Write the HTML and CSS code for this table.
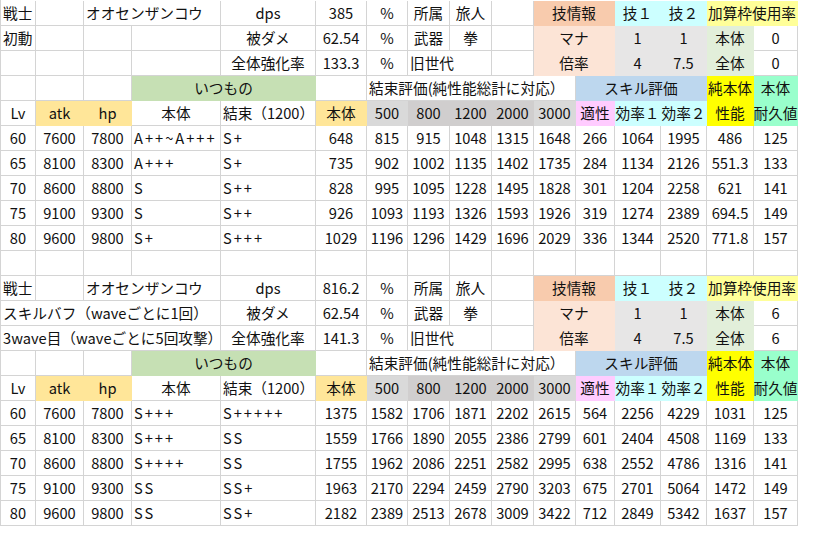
FILE: index.html
```html
<!DOCTYPE html>
<html lang="ja">
<head>
<meta charset="utf-8">
<title>sheet</title>
<link rel="stylesheet" href="styles.css">
</head>
<body>
<div class="sheet">
  <!-- block 1 -->
  <div class="c l">戦士</div><div class="c"></div><div class="c l s2">オオセンザンコウ</div><div class="c">dps</div><div class="c">385</div><div class="c">%</div><div class="c">所属</div><div class="c">旅人</div><div class="c"></div><div class="c s2 or">技情報</div><div class="c cy">技１</div><div class="c cy">技２</div><div class="c s2 ly">加算枠使用率</div>

  <div class="c l">初動</div><div class="c"></div><div class="c"></div><div class="c"></div><div class="c">被ダメ</div><div class="c">62.54</div><div class="c">%</div><div class="c">武器</div><div class="c">拳</div><div class="c"></div><div class="c s2 pe">マナ</div><div class="c gy">1</div><div class="c gy">1</div><div class="c lg">本体</div><div class="c">0</div>

  <div class="c"></div><div class="c"></div><div class="c"></div><div class="c"></div><div class="c">全体強化率</div><div class="c">133.3</div><div class="c">%</div><div class="c l s2">旧世代</div><div class="c"></div><div class="c s2 pe">倍率</div><div class="c gy">4</div><div class="c gy">7.5</div><div class="c lg">全体</div><div class="c">0</div>

  <div class="c"></div><div class="c"></div><div class="c"></div><div class="c s2 gr">いつもの</div><div class="c"></div><div class="c l s5">結束評価(純性能総計に対応）</div><div class="c s3 bl">スキル評価</div><div class="c ye">純本体</div><div class="c mi">本体</div>

  <div class="c">Lv</div><div class="c go">atk</div><div class="c go">hp</div><div class="c">本体</div><div class="c l">結束（1200）</div><div class="c go">本体</div><div class="c g1">500</div><div class="c g2">800</div><div class="c g2">1200</div><div class="c g2">2000</div><div class="c g1">3000</div><div class="c pk">適性</div><div class="c cy">効率１</div><div class="c cy">効率２</div><div class="c ye">性能</div><div class="c mi">耐久値</div>

  <div class="c">60</div><div class="c">7600</div><div class="c">7800</div><div class="c l g">A++~A+++</div><div class="c l g">S+</div><div class="c">648</div><div class="c">815</div><div class="c">915</div><div class="c">1048</div><div class="c">1315</div><div class="c">1648</div><div class="c">266</div><div class="c">1064</div><div class="c">1995</div><div class="c">486</div><div class="c">125</div>
  <div class="c">65</div><div class="c">8100</div><div class="c">8300</div><div class="c l g">A+++</div><div class="c l g">S+</div><div class="c">735</div><div class="c">902</div><div class="c">1002</div><div class="c">1135</div><div class="c">1402</div><div class="c">1735</div><div class="c">284</div><div class="c">1134</div><div class="c">2126</div><div class="c">551.3</div><div class="c">133</div>
  <div class="c">70</div><div class="c">8600</div><div class="c">8800</div><div class="c l g">S</div><div class="c l g">S++</div><div class="c">828</div><div class="c">995</div><div class="c">1095</div><div class="c">1228</div><div class="c">1495</div><div class="c">1828</div><div class="c">301</div><div class="c">1204</div><div class="c">2258</div><div class="c">621</div><div class="c">141</div>
  <div class="c">75</div><div class="c">9100</div><div class="c">9300</div><div class="c l g">S</div><div class="c l g">S++</div><div class="c">926</div><div class="c">1093</div><div class="c">1193</div><div class="c">1326</div><div class="c">1593</div><div class="c">1926</div><div class="c">319</div><div class="c">1274</div><div class="c">2389</div><div class="c">694.5</div><div class="c">149</div>
  <div class="c">80</div><div class="c">9600</div><div class="c">9800</div><div class="c l g">S+</div><div class="c l g">S+++</div><div class="c">1029</div><div class="c">1196</div><div class="c">1296</div><div class="c">1429</div><div class="c">1696</div><div class="c">2029</div><div class="c">336</div><div class="c">1344</div><div class="c">2520</div><div class="c">771.8</div><div class="c">157</div>

  <!-- spacer row -->
  <div class="c"></div><div class="c"></div><div class="c"></div><div class="c"></div><div class="c"></div><div class="c"></div><div class="c"></div><div class="c"></div><div class="c"></div><div class="c"></div><div class="c"></div><div class="c"></div><div class="c"></div><div class="c"></div><div class="c"></div><div class="c"></div>

  <!-- block 2 -->
  <div class="c l">戦士</div><div class="c"></div><div class="c l s2">オオセンザンコウ</div><div class="c">dps</div><div class="c">816.2</div><div class="c">%</div><div class="c">所属</div><div class="c">旅人</div><div class="c"></div><div class="c s2 or">技情報</div><div class="c cy">技１</div><div class="c cy">技２</div><div class="c s2 ly">加算枠使用率</div>

  <div class="c l s4">スキルバフ（waveごとに1回）</div><div class="c">被ダメ</div><div class="c">62.54</div><div class="c">%</div><div class="c">武器</div><div class="c">拳</div><div class="c"></div><div class="c s2 pe">マナ</div><div class="c gy">1</div><div class="c gy">1</div><div class="c lg">本体</div><div class="c">6</div>

  <div class="c l s4">3wave目（waveごとに5回攻撃）</div><div class="c">全体強化率</div><div class="c">141.3</div><div class="c">%</div><div class="c l s2">旧世代</div><div class="c"></div><div class="c s2 pe">倍率</div><div class="c gy">4</div><div class="c gy">7.5</div><div class="c lg">全体</div><div class="c">6</div>

  <div class="c"></div><div class="c"></div><div class="c"></div><div class="c s2 gr">いつもの</div><div class="c"></div><div class="c l s5">結束評価(純性能総計に対応）</div><div class="c s3 bl">スキル評価</div><div class="c ye">純本体</div><div class="c mi">本体</div>

  <div class="c">Lv</div><div class="c go">atk</div><div class="c go">hp</div><div class="c">本体</div><div class="c l">結束（1200）</div><div class="c go">本体</div><div class="c g1">500</div><div class="c g2">800</div><div class="c g2">1200</div><div class="c g2">2000</div><div class="c g1">3000</div><div class="c pk">適性</div><div class="c cy">効率１</div><div class="c cy">効率２</div><div class="c ye">性能</div><div class="c mi">耐久値</div>

  <div class="c">60</div><div class="c">7600</div><div class="c">7800</div><div class="c l g">S+++</div><div class="c l g">S+++++</div><div class="c">1375</div><div class="c">1582</div><div class="c">1706</div><div class="c">1871</div><div class="c">2202</div><div class="c">2615</div><div class="c">564</div><div class="c">2256</div><div class="c">4229</div><div class="c">1031</div><div class="c">125</div>
  <div class="c">65</div><div class="c">8100</div><div class="c">8300</div><div class="c l g">S+++</div><div class="c l g">SS</div><div class="c">1559</div><div class="c">1766</div><div class="c">1890</div><div class="c">2055</div><div class="c">2386</div><div class="c">2799</div><div class="c">601</div><div class="c">2404</div><div class="c">4508</div><div class="c">1169</div><div class="c">133</div>
  <div class="c">70</div><div class="c">8600</div><div class="c">8800</div><div class="c l g">S++++</div><div class="c l g">SS</div><div class="c">1755</div><div class="c">1962</div><div class="c">2086</div><div class="c">2251</div><div class="c">2582</div><div class="c">2995</div><div class="c">638</div><div class="c">2552</div><div class="c">4786</div><div class="c">1316</div><div class="c">141</div>
  <div class="c">75</div><div class="c">9100</div><div class="c">9300</div><div class="c l g">SS</div><div class="c l g">SS+</div><div class="c">1963</div><div class="c">2170</div><div class="c">2294</div><div class="c">2459</div><div class="c">2790</div><div class="c">3203</div><div class="c">675</div><div class="c">2701</div><div class="c">5064</div><div class="c">1472</div><div class="c">149</div>
  <div class="c">80</div><div class="c">9600</div><div class="c">9800</div><div class="c l g">SS</div><div class="c l g">SS+</div><div class="c">2182</div><div class="c">2389</div><div class="c">2513</div><div class="c">2678</div><div class="c">3009</div><div class="c">3422</div><div class="c">712</div><div class="c">2849</div><div class="c">5342</div><div class="c">1637</div><div class="c">157</div>
</div>
</body>
</html>
```
FILE: styles.css
```css
html, body {
  margin: 0;
  padding: 0;
  background: #ffffff;
}

.sheet {
  display: grid;
  grid-template-columns: 35px 48px 48px 89px 95px 51px 41px 42px 42px 42px 42px 39px 46px 46px 47px 44px;
  grid-auto-rows: 25px;
  width: 797px;
  padding-top: 1px;
  border-left: 1px solid #d4d4d4;
  font-family: "Noto Sans CJK JP", "Noto Sans", sans-serif;
  font-size: 14.67px;
  color: #111111;
}

.c {
  box-sizing: border-box;
  display: flex;
  align-items: center;
  justify-content: center;
  white-space: nowrap;
  overflow: visible;
  border-right: 1px solid #d4d4d4;
  border-bottom: 1px solid #d4d4d4;
  background: #ffffff;
  line-height: 1;
  padding-top: 1px;
}

.l {
  justify-content: flex-start;
  padding-left: 2px;
}

.g {
  letter-spacing: 2px;
}

.s2 { grid-column: span 2; }
.s3 { grid-column: span 3; }
.s4 { grid-column: span 4; }
.s5 { grid-column: span 5; }

.or { background: #f8cbad; border-color: #f8cbad; }
.pe { background: #fce4d6; border-color: #fce4d6; }
.cy { background: #ccffff; border-color: #ccffff; }
.ly { background: #ffff99; border-color: #ffff99; }
.gy { background: #e7e6e6; border-color: #e7e6e6; }
.lg { background: #e2efda; border-color: #e2efda; }
.gr { background: #c6e0b4; border-color: #c6e0b4; }
.bl { background: #bdd7ee; border-color: #bdd7ee; }
.ye { background: #ffff00; border-color: #ffff00; }
.mi { background: #99ffcc; border-color: #99ffcc; }
.go { background: #ffe699; border-color: #ffe699; }
.g1 { background: #d9d9d9; border-color: #d9d9d9; }
.g2 { background: #d0cece; border-color: #d0cece; }
.pk { background: #ffccff; border-color: #ffccff; }
```
